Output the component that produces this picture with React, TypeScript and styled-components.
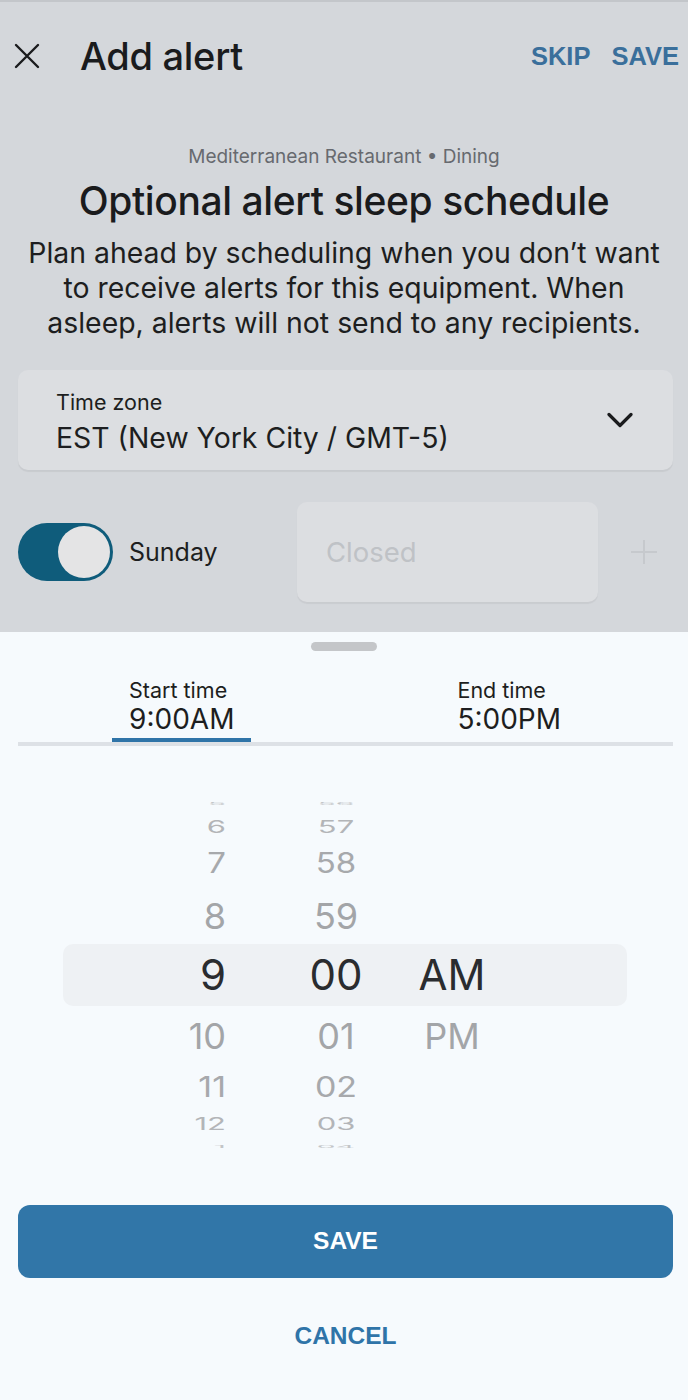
import styled, { createGlobalStyle } from 'styled-components';

const GlobalStyle = createGlobalStyle`
  html, body {
    margin: 0;
    padding: 0;
    background: #f6fafd;
  }
  body {
    font-family: Inter, "Noto Sans", sans-serif;
    -webkit-font-smoothing: antialiased;
  }
`;

const Screen = styled.div`
  width: 688px;
  min-height: 1400px;
  display: flex;
  flex-direction: column;
`;

const Backdrop = styled.section`
  height: 632px;
  background: #d4d7db;
  border-top: 2px solid #c3c6ca;
  box-sizing: border-box;
  display: flex;
  flex-direction: column;
`;

const Header = styled.header`
  height: 56px;
  margin-top: 26px;
  display: flex;
  align-items: center;
  padding: 0 9px 0 14px;
`;

const CloseButton = styled.button`
  width: 26px;
  height: 26px;
  padding: 0;
  border: 0;
  background: none;
  display: flex;
`;

const HeaderTitle = styled.h1`
  margin: 0 0 0 40px;
  flex: 1;
  font-size: 38px;
  font-weight: 500;
  letter-spacing: -0.3px;
  color: #1a1b1d;
`;

const HeaderAction = styled.button`
  border: 0;
  background: none;
  padding: 0;
  margin-left: 21px;
  font-family: "Liberation Sans", Arial, sans-serif;
  font-weight: 700;
  font-size: 25.5px;
  color: #3a6f9b;
`;

const Info = styled.div`
  margin-top: 61px;
  display: flex;
  flex-direction: column;
  align-items: center;
  text-align: center;
`;

const Venue = styled.div`
  font-size: 19px;
  line-height: 24px;
  color: #676a6f;
`;

const Title = styled.h2`
  margin: 9px 0 0;
  font-size: 39px;
  line-height: 46px;
  font-weight: 500;
  letter-spacing: -0.4px;
  color: #1a1b1d;
`;

const Description = styled.p`
  margin: 11px 0 0;
  padding: 0 16px;
  font-size: 28.4px;
  line-height: 35px;
  color: #1d1e20;
`;

const SelectCard = styled.div`
  margin: 30px 15px 0 18px;
  height: 100px;
  box-sizing: border-box;
  border-radius: 10px;
  background: #dcdee1;
  box-shadow: 0 2px 1px rgba(0, 0, 0, 0.06);
  display: flex;
  align-items: flex-start;
  padding: 19px 40px 0 38px;
`;

const SelectText = styled.div`
  flex: 1;
  display: flex;
  flex-direction: column;
`;

const FieldLabel = styled.span`
  font-size: 21.5px;
  line-height: 26px;
  color: #1d1e20;
`;

const FieldValue = styled.span`
  margin-top: 4px;
  font-size: 28.4px;
  line-height: 38px;
  color: #1d1e20;
`;

const ChevronSlot = styled.div`
  align-self: center;
  margin-top: -19px;
  display: flex;
`;

const DayRow = styled.div`
  margin-top: 32px;
  height: 100px;
  display: flex;
  align-items: center;
`;

const DayToggleArea = styled.div`
  width: 297px;
  display: flex;
  align-items: center;
  padding-left: 18px;
  box-sizing: border-box;
`;

const Toggle = styled.div<{ $on: boolean }>`
  width: 95px;
  height: 58px;
  border-radius: 29px;
  background: ${(p) => (p.$on ? '#0f5c7b' : '#c5c8cc')};
  box-sizing: border-box;
  padding: 3px;
  display: flex;
  justify-content: ${(p) => (p.$on ? 'flex-end' : 'flex-start')};
`;

const Knob = styled.div`
  width: 52px;
  height: 52px;
  border-radius: 50%;
  background: #e4e4e5;
`;

const DayName = styled.span`
  margin-left: 16px;
  font-size: 25px;
  color: #1d1e20;
`;

const ClosedBox = styled.div`
  width: 301px;
  height: 100px;
  border-radius: 10px;
  background: #dcdee1;
  box-shadow: 0 2px 1px rgba(0, 0, 0, 0.05);
  display: flex;
  align-items: center;
  padding-left: 29px;
  box-sizing: border-box;
  font-size: 27.5px;
  color: #bfc2c6;
`;

const AddSlot = styled.div`
  flex: 1;
  display: flex;
  justify-content: center;
  padding-left: 2px;
`;

const Sheet = styled.section`
  flex: 1;
  background: #f6fafd;
  display: flex;
  flex-direction: column;
`;

const Handle = styled.div`
  align-self: center;
  margin-top: 10px;
  width: 66px;
  height: 9px;
  border-radius: 5px;
  background: #c4c6c9;
`;

const Tabs = styled.div`
  margin: 26px 15px 0 18px;
  display: grid;
  grid-template-columns: 1fr 1fr;
  border-bottom: 4px solid #dde1e6;
`;

const Tab = styled.div`
  display: flex;
  justify-content: center;
`;

const TabInner = styled.div<{ $active: boolean }>`
  display: flex;
  flex-direction: column;
  padding: 0 17px 3px;
  border-bottom: 4px solid ${(p) => (p.$active ? '#2f74a8' : 'transparent')};
`;

const TabLabel = styled.span`
  font-size: 21.5px;
  line-height: 26px;
  color: #1d1e20;
`;

const TabValue = styled.span`
  font-size: 28px;
  line-height: 32px;
  color: #1d1e20;
`;

const Picker = styled.div`
  position: relative;
  margin-top: 49px;
  display: flex;
  padding-left: 126px;
`;

const SelectionBand = styled.div`
  position: absolute;
  left: 63px;
  right: 61px;
  top: 149px;
  height: 62px;
  border-radius: 10px;
  background: #eef1f4;
`;

const WheelColumn = styled.div<{ $width: number; $gap: number; $align: string }>`
  position: relative;
  width: ${(p) => p.$width}px;
  margin-left: ${(p) => p.$gap}px;
  display: flex;
  flex-direction: column;
  align-items: ${(p) => p.$align};
`;

const WheelItem = styled.div<{ $h: number; $size: number; $scale: number; $color: string }>`
  height: ${(p) => p.$h}px;
  display: flex;
  align-items: center;
  font-size: ${(p) => p.$size}px;
  line-height: 1;
  color: ${(p) => p.$color};
  transform: scaleY(${(p) => p.$scale});
  transform-origin: center;
  white-space: nowrap;
`;

const Actions = styled.div`
  margin: 49px 15px 0 18px;
  display: flex;
  flex-direction: column;
  align-items: stretch;
`;

const PrimaryButton = styled.button`
  height: 73px;
  border: 0;
  border-radius: 12px;
  background: #3176a8;
  color: #ffffff;
  font-family: "Liberation Sans", Arial, sans-serif;
  font-weight: 700;
  font-size: 24.5px;
`;

const TextButton = styled.button`
  margin-top: 32px;
  height: 52px;
  border: 0;
  background: none;
  color: #2f74a8;
  font-family: "Liberation Sans", Arial, sans-serif;
  font-weight: 700;
  font-size: 24.5px;
`;

const rows = [
  { h: 18, size: 30, scale: 0.12, color: '#c3c5c8' },
  { h: 27.5, size: 31, scale: 0.55, color: '#b3b5b8' },
  { h: 45, size: 33, scale: 0.84, color: '#a7a9ac' },
  { h: 59, size: 36, scale: 0.98, color: '#a3a5a8' },
  { h: 61, size: 42, scale: 1, color: '#2a2c2f' },
  { h: 60, size: 36, scale: 0.98, color: '#a3a5a8' },
  { h: 42, size: 34, scale: 0.84, color: '#a7a9ac' },
  { h: 30, size: 31, scale: 0.55, color: '#b3b5b8' },
  { h: 18, size: 30, scale: 0.12, color: '#c3c5c8' },
];

const hours = ['5', '6', '7', '8', '9', '10', '11', '12', '1'];
const minutes = ['56', '57', '58', '59', '00', '01', '02', '03', '04'];
const periods = ['', '', '', '', 'AM', 'PM', '', '', ''];

function Wheel({ values, width, gap, align }: { values: string[]; width: number; gap: number; align: string }) {
  return (
    <WheelColumn $width={width} $gap={gap} $align={align}>
      {rows.map((r, i) => (
        <WheelItem key={i} $h={r.h} $size={r.size} $scale={r.scale} $color={r.color}>
          {values[i]}
        </WheelItem>
      ))}
    </WheelColumn>
  );
}

function CloseIcon() {
  return (
    <svg width="26" height="26" viewBox="0 0 26 26">
      <path d="M2 2 L24 24 M24 2 L2 24" stroke="#1a1b1d" strokeWidth="2.4" strokeLinecap="round" />
    </svg>
  );
}

function ChevronIcon() {
  return (
    <svg width="26" height="17" viewBox="0 0 26 17">
      <path d="M2 2.5 L13 13.5 L24 2.5" fill="none" stroke="#1a1b1d" strokeWidth="3.2" strokeLinecap="round" strokeLinejoin="round" />
    </svg>
  );
}

function PlusIcon() {
  return (
    <svg width="28" height="26" viewBox="0 0 28 26">
      <path d="M14 1 V25 M1 13 H27" stroke="#c6c9cd" strokeWidth="2" />
    </svg>
  );
}

export default function App() {
  return (
    <>
      <GlobalStyle />
      <Screen>
        <Backdrop>
          <Header>
            <CloseButton aria-label="Close">
              <CloseIcon />
            </CloseButton>
            <HeaderTitle>Add alert</HeaderTitle>
            <HeaderAction>SKIP</HeaderAction>
            <HeaderAction>SAVE</HeaderAction>
          </Header>
          <Info>
            <Venue>Mediterranean Restaurant • Dining</Venue>
            <Title>Optional alert sleep schedule</Title>
            <Description>
              Plan ahead by scheduling when you don’t want
              <br />
              to receive alerts for this equipment. When
              <br />
              asleep, alerts will not send to any recipients.
            </Description>
          </Info>
          <SelectCard>
            <SelectText>
              <FieldLabel>Time zone</FieldLabel>
              <FieldValue>EST (New York City / GMT-5)</FieldValue>
            </SelectText>
            <ChevronSlot>
              <ChevronIcon />
            </ChevronSlot>
          </SelectCard>
          <DayRow>
            <DayToggleArea>
              <Toggle $on>
                <Knob />
              </Toggle>
              <DayName>Sunday</DayName>
            </DayToggleArea>
            <ClosedBox>Closed</ClosedBox>
            <AddSlot>
              <PlusIcon />
            </AddSlot>
          </DayRow>
        </Backdrop>
        <Sheet>
          <Handle />
          <Tabs>
            <Tab>
              <TabInner $active>
                <TabLabel>Start time</TabLabel>
                <TabValue>9:00AM</TabValue>
              </TabInner>
            </Tab>
            <Tab>
              <TabInner $active={false}>
                <TabLabel>End time</TabLabel>
                <TabValue>5:00PM</TabValue>
              </TabInner>
            </Tab>
          </Tabs>
          <Picker>
            <SelectionBand />
            <Wheel values={hours} width={100} gap={0} align="flex-end" />
            <Wheel values={minutes} width={100} gap={60} align="center" />
            <Wheel values={periods} width={100} gap={16} align="center" />
          </Picker>
          <Actions>
            <PrimaryButton>SAVE</PrimaryButton>
            <TextButton>CANCEL</TextButton>
          </Actions>
        </Sheet>
      </Screen>
    </>
  );
}
